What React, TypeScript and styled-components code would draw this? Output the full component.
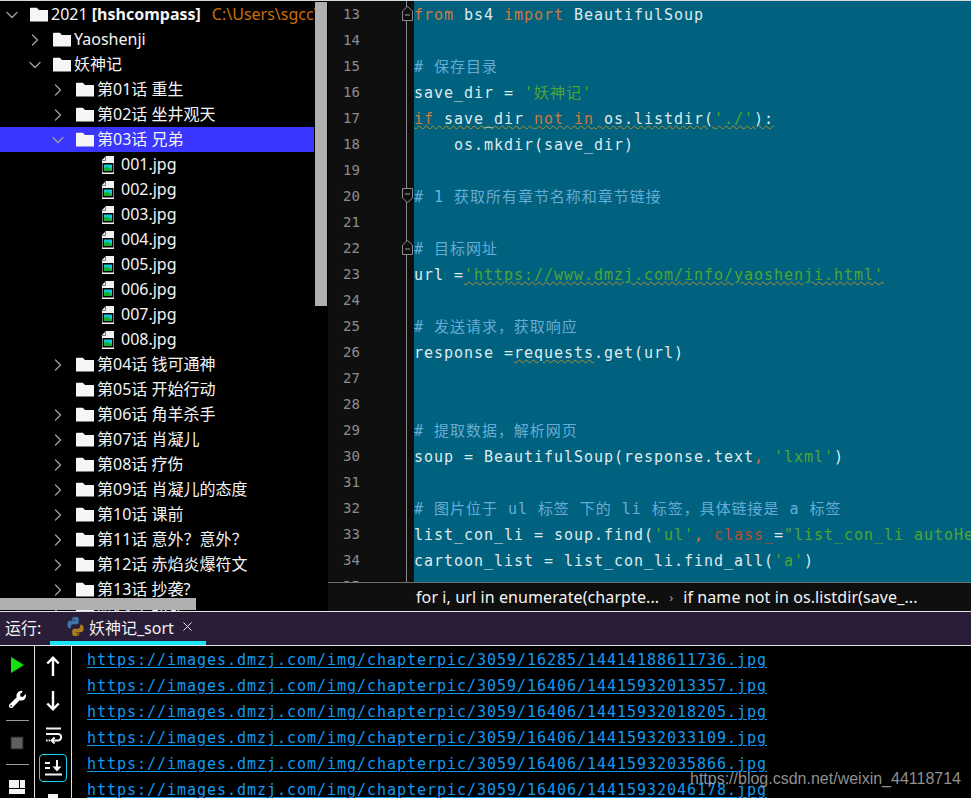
import React from "react";
import styled, { createGlobalStyle } from "styled-components";
import { ChevronDown, ChevronRight, X } from "lucide-react";
import { FaWrench } from "react-icons/fa";

const SANS = `"Noto Sans", "Noto Sans CJK SC", sans-serif`;
const MONO = `"DejaVu Sans Mono", "Noto Sans CJK SC", monospace`;

const GlobalStyle = createGlobalStyle`
  html, body {
    margin: 0;
    padding: 0;
    background: #000;
  }
  * {
    box-sizing: border-box;
  }
`;

const WINDOW = styled.div`
  position: relative;
  width: 971px;
  height: 798px;
  overflow: hidden;
  display: flex;
  flex-direction: column;
  background: #000;
`;

const TOP_PANE = styled.div`
  height: 611px;
  flex: none;
  display: flex;
  border-top: 1px solid #d8d8d8;
`;

const SIDEBAR = styled.aside`
  position: relative;
  width: 328px;
  flex: none;
  overflow: hidden;
  background: #000;
`;

const TREE = styled.div`
  width: 315px;
  padding-top: 1px;
  overflow: hidden;
  font-family: ${SANS};
  font-size: 16px;
  color: #f4f4f4;
`;

const ROW = styled.div<{ $depth: number; $selected?: boolean }>`
  height: 25px;
  width: ${(p) => (p.$selected ? 314 : 315)}px;
  display: flex;
  align-items: center;
  padding-left: ${(p) => 6 + p.$depth * 23}px;
  line-height: 25px;
  white-space: nowrap;
  background: ${(p) => (p.$selected ? "#3a35ff" : "transparent")};
`;

const ARROW = styled.span`
  width: 24px;
  flex: none;
  display: flex;
  align-items: center;
  color: #9c9c9c;

  svg {
    margin-left: -4px;
  }
`;

const ROW_ICON = styled.svg`
  flex: none;
  margin-right: 3px;
`;

const FILE_ICON = styled.svg`
  flex: none;
  margin: 0 6px 0 2px;
`;

const PATH_HINT = styled.span`
  margin-left: 11px;
  color: #c96f0a;
`;

const V_THUMB = styled.div`
  position: absolute;
  top: 1px;
  right: 1px;
  width: 12px;
  height: 304px;
  background: #b0b0b0;
`;

const H_THUMB = styled.div`
  position: absolute;
  left: 0;
  bottom: 1px;
  width: 196px;
  height: 12px;
  background: #b0b0b0;
`;

const EDITOR = styled.section`
  flex: 1;
  min-width: 0;
  display: flex;
  flex-direction: column;
`;

const CODE_AREA = styled.div`
  height: 581px;
  flex: none;
  overflow: hidden;
  background: #0f0f0f;
`;

const LINE = styled.div`
  position: relative;
  display: flex;
  height: 26px;
`;

const LINE_NO = styled.div`
  width: 79px;
  flex: none;
  padding-left: 15px;
  border-right: 1px solid #8c8c8c;
  font-family: ${MONO};
  font-size: 14px;
  line-height: 26px;
  color: #8d8d8d;
`;

const FOLD_SPACE = styled.div`
  width: 7px;
  flex: none;
`;

const CODE = styled.div`
  flex: 1;
  min-width: 0;
  overflow: hidden;
  background: #00627f;
  font-family: ${MONO};
  font-size: 15px;
  letter-spacing: 0.97px;
  line-height: 28px;
  white-space: pre;
  color: #d8e5ea;
`;

type Kind = "plain" | "kw" | "com" | "num" | "str" | "attr" | "warn" | "strwarn";

const kindColor: Record<Kind, string> = {
  plain: "#dfeaee",
  kw: "#cc7a3e",
  com: "#66acd6",
  num: "#66b4e6",
  str: "#4fa531",
  attr: "#b9502f",
  warn: "#dfeaee",
  strwarn: "#4fa531",
};

const TOKEN = styled.span<{ $kind: Kind }>`
  color: ${(p) => kindColor[p.$kind]};
  ${(p) =>
    p.$kind === "warn" || p.$kind === "strwarn"
      ? "text-decoration: underline wavy #b08f28 1px; text-underline-offset: 1px;"
      : ""}
`;

const WARN_LINE = styled.span`
  text-decoration: underline wavy #b08f28 1px;
  text-underline-offset: 1px;
`;

const FOLD = styled.svg`
  position: absolute;
  left: 74px;
  top: 5px;
`;

const CRUMBS = styled.div`
  height: 29px;
  flex: none;
  display: flex;
  align-items: center;
  padding-left: 88px;
  border-top: 1px solid #6e6e6e;
  background: #0f0f0f;
  font-family: ${SANS};
  font-size: 16px;
  letter-spacing: 0.1px;
  color: #f4f4f4;
  white-space: nowrap;
`;

const CRUMB_SEP = styled.span`
  width: 24px;
  text-align: center;
  color: #9a9a9a;
  font-size: 13px;
`;

const RUN_BAR = styled.div`
  height: 35px;
  flex: none;
  display: flex;
  background: #2a1d38;
  border-top: 1px solid #e2e2e2;
  border-bottom: 1px solid #e2e2e2;
  font-family: ${SANS};
  font-size: 16px;
  color: #f2f2f2;
`;

const RUN_LABEL = styled.div`
  width: 50px;
  padding-left: 5px;
  line-height: 32px;
`;

const TAB = styled.div`
  width: 156px;
  display: flex;
  align-items: center;
  padding-left: 16px;
  border-bottom: 4px solid #15e6fb;
`;

const TAB_LABEL = styled.span`
  margin-left: 4px;
  flex: 1;
`;

const TAB_CLOSE = styled.span`
  display: flex;
  margin-right: 11px;
  color: #e4e4e4;
`;

const RUN_BODY = styled.div`
  flex: 1;
  min-height: 0;
  display: flex;
  overflow: hidden;
`;

const STRIP = styled.div<{ $width: number }>`
  width: ${(p) => p.$width}px;
  flex: none;
  display: flex;
  flex-direction: column;
  align-items: center;
  padding-top: 2px;
  border-right: 1px solid #e2e2e2;
`;

const TOOL = styled.div<{ $height?: number }>`
  width: 100%;
  height: ${(p) => p.$height ?? 34}px;
  flex: none;
  display: flex;
  align-items: center;
  justify-content: center;
  color: #fff;
`;

const ACTIVE_TOOL = styled.div`
  width: 28px;
  height: 28px;
  flex: none;
  margin-top: 1px;
  display: flex;
  align-items: center;
  justify-content: center;
  border: 1px solid #15d6ea;
  border-radius: 4px;
  color: #fff;
`;

const STRIP_SEP = styled.div`
  width: 23px;
  height: 1px;
  flex: none;
  margin: 4px 0 5px;
  background: #9a9a9a;
`;

const PRINT_STUB = styled.div`
  width: 10px;
  height: 12px;
  flex: none;
  margin-top: 12px;
  background: #f4f4f4;
`;

const CONSOLE = styled.div`
  flex: 1;
  min-width: 0;
  padding-left: 15px;
  font-family: ${MONO};
  font-size: 15px;
  letter-spacing: 0.97px;
  line-height: 28px;
  color: #0f9bf2;
`;

const LINK = styled.div`
  height: 26px;
  text-decoration: underline;
  text-underline-offset: 2px;
  white-space: pre;
`;

const WATERMARK = styled.div`
  position: absolute;
  right: 10px;
  bottom: 10px;
  font-family: "Liberation Sans", sans-serif;
  font-size: 16px;
  line-height: 18px;
  color: rgba(172, 172, 172, 0.85);
`;

const Folder = () => (
  <ROW_ICON width="18" height="15" viewBox="0 0 18 15">
    <path d="M0 1.5A.8.8 0 0 1 .8.7h6L9 3h9v11.4H0z" fill="#f6f6f6" />
  </ROW_ICON>
);

const JpgFile = () => (
  <FILE_ICON width="14" height="18" viewBox="0 0 14 18">
    <path d="M5 0h8v18H1V4z" fill="#f2f2f2" />
    <path d="M4.5 .5v4h-4" fill="none" stroke="#777" />
    <rect x="1.5" y="7" width="11" height="9.5" fill="#000" />
    <rect x="3" y="8.5" width="8" height="6.5" fill="#14c8d8" />
    <path d="M3 15v-3l3-1.5 5 3V15z" fill="#14b030" />
  </FILE_ICON>
);

type TreeItem = { depth: number; label: React.ReactNode; kind: "open" | "closed" | "leaf" | "file"; selected?: boolean };

const chapters = (items: [string, boolean?][]): TreeItem[] =>
  items.map(([label, leaf]) => ({ depth: 2, label, kind: leaf ? "leaf" : "closed" }));

const treeItems: TreeItem[] = [
  {
    depth: 0,
    kind: "open",
    label: (
      <>
        2021 <b>[hshcompass]</b>
        <PATH_HINT>C:\Users\sgcc\PycharmProjects</PATH_HINT>
      </>
    ),
  },
  { depth: 1, kind: "closed", label: "Yaoshenji" },
  { depth: 1, kind: "open", label: "妖神记" },
  ...chapters([["第01话 重生"], ["第02话 坐井观天"]]),
  { depth: 2, kind: "open", label: "第03话 兄弟", selected: true },
  ...["001", "002", "003", "004", "005", "006", "007", "008"].map(
    (n): TreeItem => ({ depth: 3, kind: "file", label: `${n}.jpg` }),
  ),
  ...chapters([
    ["第04话 钱可通神"],
    ["第05话 开始行动", true],
    ["第06话 角羊杀手"],
    ["第07话 肖凝儿"],
    ["第08话 疗伤"],
    ["第09话 肖凝儿的态度"],
    ["第10话 课前"],
    ["第11话 意外？意外？"],
    ["第12话 赤焰炎爆符文"],
    ["第13话 抄袭?"],
    ["第14话 初战"],
  ]),
];

type Tok = [Kind, string];

const codeLines: { tokens: Tok[]; fold?: "up" | "down"; warnAll?: boolean }[] = [
  { fold: "up", tokens: [["kw", "from"], ["plain", " bs4 "], ["kw", "import"], ["plain", " BeautifulSoup"]] },
  { tokens: [] },
  { tokens: [["com", "# 保存目录"]] },
  { tokens: [["plain", "save_dir = "], ["str", "'妖神记'"]] },
  {
    warnAll: true,
    tokens: [
      ["kw", "if"],
      ["plain", " save_dir "],
      ["kw", "not in"],
      ["plain", " os.listdir("],
      ["str", "'./'"],
      ["plain", "):"],
    ],
  },
  { tokens: [["plain", "    os.mkdir(save_dir)"]] },
  { tokens: [] },
  { fold: "down", tokens: [["com", "# "], ["num", "1"], ["com", " 获取所有章节名称和章节链接"]] },
  { tokens: [] },
  { fold: "up", tokens: [["com", "# 目标网址"]] },
  { tokens: [["plain", "url ="], ["strwarn", "'https://www.dmzj.com/info/yaoshenji.html'"]] },
  { tokens: [] },
  { tokens: [["com", "# 发送请求，获取响应"]] },
  { tokens: [["plain", "response ="], ["warn", "requests"], ["plain", ".get(url)"]] },
  { tokens: [] },
  { tokens: [] },
  { tokens: [["com", "# 提取数据，解析网页"]] },
  {
    tokens: [
      ["plain", "soup = BeautifulSoup(response.text"],
      ["kw", ","],
      ["plain", " "],
      ["str", "'lxml'"],
      ["plain", ")"],
    ],
  },
  { tokens: [] },
  { tokens: [["com", "# 图片位于 ul 标签 下的 li 标签，具体链接是 a 标签"]] },
  {
    tokens: [
      ["plain", "list_con_li = soup.find("],
      ["str", "'ul'"],
      ["kw", ", "],
      ["attr", "class_"],
      ["plain", "="],
      ["str", "\"list_con_li autoHeight\""],
      ["plain", ")"],
    ],
  },
  { tokens: [["plain", "cartoon_list = list_con_li.find_all("], ["str", "'a'"], ["plain", ")"]] },
  { tokens: [] },
];

const links = [
  "16285/14414188611736",
  "16406/14415932013357",
  "16406/14415932018205",
  "16406/14415932033109",
  "16406/14415932035866",
  "16406/14415932046178",
];

const FoldMark = ({ dir }: { dir: "up" | "down" }) => (
  <FOLD width="11" height="15" viewBox="0 0 11 15">
    <path
      d={dir === "up" ? "M.5 5 5.5.5l5 4.5v9.5H.5z" : "M.5.5h10V10l-5 4.5L.5 10z"}
      fill="#0f0f0f"
      stroke="#8c8c8c"
    />
    <path d={dir === "up" ? "M3 9h5" : "M3 6h5"} stroke="#a0a0a0" />
  </FOLD>
);

const PythonIcon = () => (
  <svg width="19" height="19" viewBox="2 2 20 20">
    <path
      d="M11.9 2C8 2 8.2 3.7 8.2 3.7v1.8H12V6H6.1S3.5 5.7 3.5 9.8s2.3 4 2.3 4h1.4v-1.9s-.1-2.3 2.2-2.3h3.8s2.2 0 2.2-2.1V4.1S16 2 11.9 2zM9.8 3.2a.7.7 0 1 1 0 1.4.7.7 0 0 1 0-1.4z"
      fill="#3f74a6"
    />
    <path
      d="M11.9 2C8 2 8.2 3.7 8.2 3.7v1.8H12V6H6.1S3.5 5.7 3.5 9.8s2.3 4 2.3 4h1.4v-1.9s-.1-2.3 2.2-2.3h3.8s2.2 0 2.2-2.1V4.1S16 2 11.9 2zM9.8 3.2a.7.7 0 1 1 0 1.4.7.7 0 0 1 0-1.4z"
      fill="#a97c1f"
      transform="rotate(180 12 12)"
    />
  </svg>
);

const TallArrow = ({ down }: { down?: boolean }) => (
  <svg width="14" height="20" viewBox="0 0 14 20" fill="none" stroke="#fff" strokeWidth="2.4">
    <path d={down ? "M7 0v18M1.3 12.5 7 18.3l5.7-5.8" : "M7 20V2M1.3 7.5 7 1.7l5.7 5.8"} />
  </svg>
);

const App = () => {
  return (
    <WINDOW>
      <GlobalStyle />
      <TOP_PANE>
        <SIDEBAR>
          <TREE>
            {treeItems.map((item, i) => (
              <ROW key={i} $depth={item.depth} $selected={item.selected}>
                {item.kind === "file" ? (
                  <>
                    <ARROW />
                    <JpgFile />
                  </>
                ) : (
                  <>
                    <ARROW>
                      {item.kind === "open" && <ChevronDown size={20} strokeWidth={1.6} />}
                      {item.kind === "closed" && <ChevronRight size={20} strokeWidth={1.6} />}
                    </ARROW>
                    <Folder />
                  </>
                )}
                <span>{item.label}</span>
              </ROW>
            ))}
          </TREE>
          <V_THUMB />
          <H_THUMB />
        </SIDEBAR>

        <EDITOR>
          <CODE_AREA>
            {codeLines.map((line, i) => (
              <LINE key={i}>
                <LINE_NO>{13 + i}</LINE_NO>
                <FOLD_SPACE />
                <CODE>
                  {line.warnAll ? (
                    <WARN_LINE>
                      {line.tokens.map(([kind, text], j) => (
                        <TOKEN key={j} $kind={kind}>
                          {text}
                        </TOKEN>
                      ))}
                    </WARN_LINE>
                  ) : (
                    line.tokens.map(([kind, text], j) => (
                      <TOKEN key={j} $kind={kind}>
                        {text}
                      </TOKEN>
                    ))
                  )}
                </CODE>
                {line.fold && <FoldMark dir={line.fold} />}
              </LINE>
            ))}
          </CODE_AREA>
          <CRUMBS>
            <span>for i, url in enumerate(charpte...</span>
            <CRUMB_SEP>›</CRUMB_SEP>
            <span>if name not in os.listdir(save_...</span>
          </CRUMBS>
        </EDITOR>
      </TOP_PANE>

      <RUN_BAR>
        <RUN_LABEL>运行:</RUN_LABEL>
        <TAB>
          <PythonIcon />
          <TAB_LABEL>妖神记_sort</TAB_LABEL>
          <TAB_CLOSE>
            <X size={15} strokeWidth={1.6} />
          </TAB_CLOSE>
        </TAB>
      </RUN_BAR>

      <RUN_BODY>
        <STRIP $width={35}>
          <TOOL>
            <svg width="13" height="16" viewBox="0 0 13 16">
              <path d="M0 0l13 8-13 8z" fill="#12e012" />
            </svg>
          </TOOL>
          <TOOL>
            <FaWrench size={17} />
          </TOOL>
          <STRIP_SEP />
          <TOOL>
            <svg width="14" height="14" viewBox="0 0 14 14">
              <rect x="1" y="1" width="12" height="12" fill="#5f5f5f" stroke="#222" />
            </svg>
          </TOOL>
          <STRIP_SEP />
          <TOOL>
            <svg width="16" height="14" viewBox="0 0 16 14">
              <path d="M0 0h10v8H0zM11 0h5v8h-5zM0 9h16v5H0z" fill="#f4f4f4" />
            </svg>
          </TOOL>
        </STRIP>

        <STRIP $width={37}>
          <TOOL $height={35}>
            <TallArrow />
          </TOOL>
          <TOOL $height={35}>
            <TallArrow down />
          </TOOL>
          <TOOL $height={35}>
            <svg width="17" height="17" viewBox="0 0 17 17" fill="none" stroke="#f4f4f4" strokeWidth="2">
              <path d="M1 1.5h15M1 7h12a3.2 3.2 0 0 1 0 6.4H7" />
              <path d="M9.6 10.5 6.6 13.4l3 3" />
              <path d="M1 13.4h4" strokeDasharray="1.6 1" />
            </svg>
          </TOOL>
          <ACTIVE_TOOL>
            <svg width="17" height="16" viewBox="0 0 17 16" fill="none" stroke="#f4f4f4" strokeWidth="2">
              <path d="M0 3h5M0 8h5M0 14.5h17M12 0v8" />
              <path d="M7.5 6.5h9l-4.5 5z" fill="#f4f4f4" stroke="none" />
            </svg>
          </ACTIVE_TOOL>
          <PRINT_STUB />
        </STRIP>

        <CONSOLE>
          {links.map((l) => (
            <LINK key={l}>{`https://images.dmzj.com/img/chapterpic/3059/${l}.jpg`}</LINK>
          ))}
        </CONSOLE>
      </RUN_BODY>

      <WATERMARK>https://blog.csdn.net/weixin_44118714</WATERMARK>
    </WINDOW>
  );
};

export default App;
